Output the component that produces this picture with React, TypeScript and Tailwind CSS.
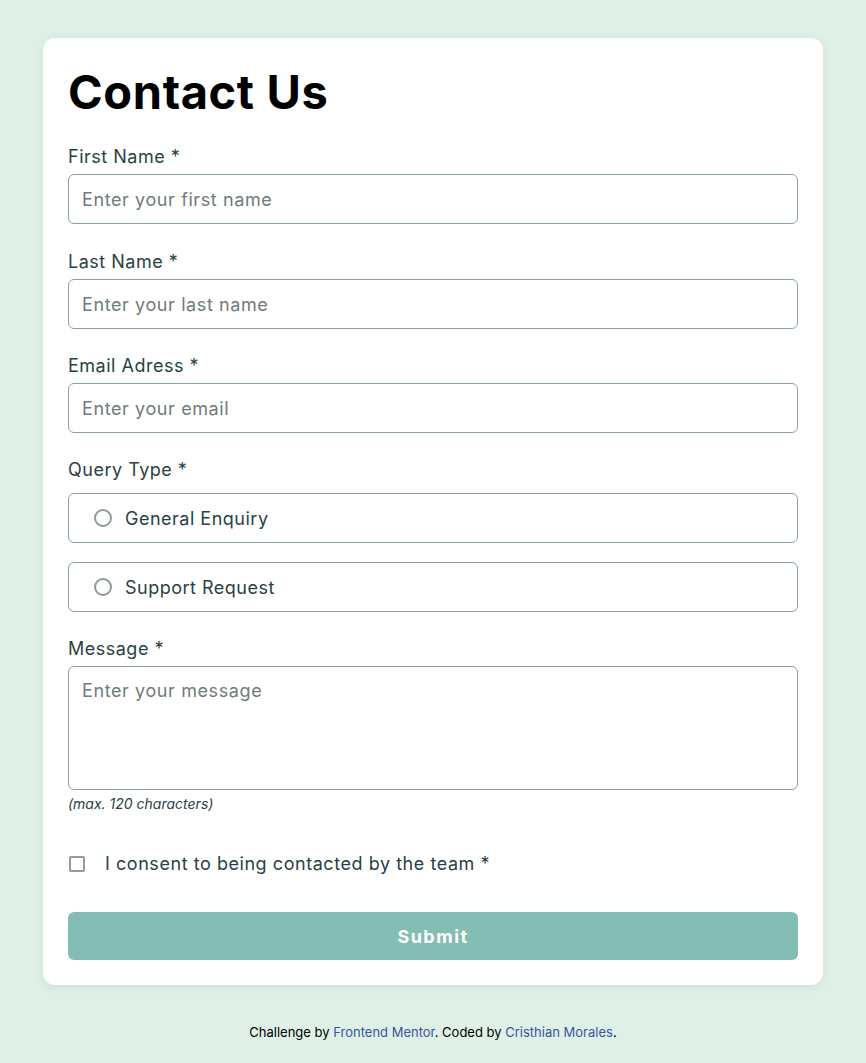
import React from 'react'

const font = { fontFamily: '"Inter", "Noto Sans", sans-serif' }

function Label({ children }: { children: React.ReactNode }) {
  return <label className="block text-[18px] leading-[24px] tracking-[0.5px] text-[#2a4144]">{children}</label>
}

function TextInput({ placeholder }: { placeholder: string }) {
  return (
    <input
      type="text"
      placeholder={placeholder}
      className="mt-[5px] block h-[50px] w-full rounded-[6px] border border-[#87a3a6] bg-white px-[13px] text-[18px] tracking-[0.6px] text-[#2a4144] outline-none placeholder:text-[#6f7b7c]"
    />
  )
}

function RadioOption({ label }: { label: string }) {
  return (
    <label className="flex h-[50px] w-full items-center gap-[13px] rounded-[6px] border border-[#87a3a6] px-[25px]">
      <span className="h-[18px] w-[18px] shrink-0 rounded-full border-2 border-[#8e9a9b]" />
      <span className="text-[18px] tracking-[0.5px] text-[#2a4144]">{label}</span>
    </label>
  )
}

export default function App() {
  return (
    <div className="min-h-[1063px] bg-[#dff0e6]" style={font}>
      <div className="flex flex-col items-center pt-[38px]">
        <form className="w-[780px] rounded-[12px] bg-white px-[25px] pb-[25px] pt-[26px] shadow-[0_2px_10px_rgba(0,0,0,0.08)]">
          <h1 className="text-[47px] font-bold leading-[56px] tracking-[0.6px] text-black">Contact Us</h1>

          <div className="mt-[25px]">
            <Label>First Name *</Label>
            <TextInput placeholder="Enter your first name" />
          </div>

          <div className="mt-[26px]">
            <Label>Last Name *</Label>
            <TextInput placeholder="Enter your last name" />
          </div>

          <div className="mt-[25px]">
            <Label>Email Adress *</Label>
            <TextInput placeholder="Enter your email" />
          </div>

          <div className="mt-[25px]">
            <Label>Query Type *</Label>
            <div className="mt-[11px] flex flex-col gap-[19px]">
              <RadioOption label="General Enquiry" />
              <RadioOption label="Support Request" />
            </div>
          </div>

          <div className="mt-[25px]">
            <Label>Message *</Label>
            <textarea
              placeholder="Enter your message"
              className="mt-[5px] block h-[124px] w-full resize-none rounded-[6px] border border-[#87a3a6] px-[13px] py-[12px] text-[18px] leading-[24px] tracking-[0.6px] text-[#2a4144] outline-none placeholder:text-[#6f7b7c]"
            />
            <p className="mt-[4px] text-[14px] italic leading-[20px] text-[#2a4144]">(max. 120 characters)</p>
          </div>

          <label className="mt-[38px] flex items-center gap-[20px] pl-[1px]">
            <span className="h-[16px] w-[16px] shrink-0 rounded-[2px] border-2 border-[#8e9a9b]" />
            <span className="text-[18px] leading-[24px] tracking-[0.55px] text-[#2a4144]">I consent to being contacted by the team *</span>
          </label>

          <button
            type="button"
            className="mt-[36px] block h-[48px] w-full rounded-[6px] bg-[#84bdb3] text-[18px] font-bold tracking-[1.5px] text-white"
          >
            Submit
          </button>
        </form>

        <p className="mt-[38px] text-[13px] text-black">
          Challenge by <a className="text-[#3e52a3]">Frontend Mentor</a>. Coded by{' '}
          <a className="text-[#3e52a3]">Cristhian Morales</a>.
        </p>
      </div>
    </div>
  )
}
